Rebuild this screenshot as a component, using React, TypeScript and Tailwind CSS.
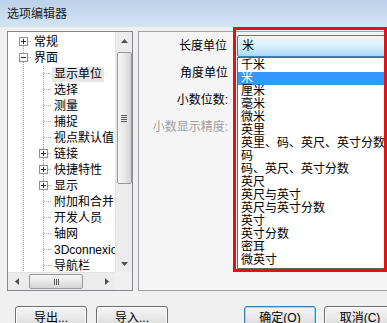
import React from "react";

type TreeNode = {
  label: string;
  level: 0 | 1;
  expander?: "plus" | "minus";
  first?: boolean;
  selected?: boolean;
};

const treeNodes: TreeNode[] = [
  { label: "常规", level: 0, expander: "plus", first: true },
  { label: "界面", level: 0, expander: "minus" },
  { label: "显示单位", level: 1, selected: true },
  { label: "选择", level: 1 },
  { label: "测量", level: 1 },
  { label: "捕捉", level: 1 },
  { label: "视点默认值", level: 1 },
  { label: "链接", level: 1, expander: "plus" },
  { label: "快捷特性", level: 1, expander: "plus" },
  { label: "显示", level: 1, expander: "plus" },
  { label: "附加和合并", level: 1 },
  { label: "开发人员", level: 1 },
  { label: "轴网", level: 1 },
  { label: "3Dconnexion", level: 1 },
  { label: "导航栏", level: 1 },
];

const unitOptions = [
  "千米",
  "米",
  "厘米",
  "毫米",
  "微米",
  "英里",
  "英里、码、英尺、英寸分数",
  "码",
  "码、英尺、英寸分数",
  "英尺",
  "英尺与英寸",
  "英尺与英寸分数",
  "英寸",
  "英寸分数",
  "密耳",
  "微英寸",
];

const DOT = "#a0a0a0";

// vertical dotted guide for an ancestor level
function Guide() {
  return (
    <svg width="20" height="16" className="shrink-0 block">
      <line x1="15.5" y1="0" x2="15.5" y2="16" stroke={DOT} strokeDasharray="1 1" />
    </svg>
  );
}

// branch connector with optional +/- box
function Branch({ first, expander }: { first?: boolean; expander?: "plus" | "minus" }) {
  return (
    <svg width="24" height="16" className="shrink-0 block">
      <line x1="15.5" y1={first ? 8 : 0} x2="15.5" y2="16" stroke={DOT} strokeDasharray="1 1" />
      <line x1="16" y1="7.5" x2="24" y2="7.5" stroke={DOT} strokeDasharray="1 1" />
      {expander && (
        <g>
          <rect x="11.5" y="3.5" width="8" height="8" fill="#fbfbfb" stroke="#8f8f8f" />
          <line x1="13" y1="7.5" x2="18" y2="7.5" stroke="#2b2b2b" />
          {expander === "plus" && <line x1="15.5" y1="5" x2="15.5" y2="10" stroke="#2b2b2b" />}
        </g>
      )}
    </svg>
  );
}

function Arrow({ dir }: { dir: "up" | "down" | "left" | "right" }) {
  const pts = {
    up: "0,4 7,4 3.5,0",
    down: "0,0 7,0 3.5,4",
    left: "4,0 4,7 0,3.5",
    right: "0,0 0,7 4,3.5",
  }[dir];
  const vertical = dir === "up" || dir === "down";
  return (
    <svg width={vertical ? 7 : 4} height={vertical ? 4 : 7}>
      <polygon points={pts} fill="#505050" />
    </svg>
  );
}

function Button({ label, focused }: { label: string; focused?: boolean }) {
  return (
    <div
      className={`w-[72px] h-[23px] rounded-[3px] border flex items-center justify-center bg-gradient-to-b from-[#f3f3f3] via-[#e9e9e9] to-[#d6d6d6] ${
        focused ? "border-[#3c7fb1] shadow-[inset_0_0_0_1px_#9fd4f5]" : "border-[#707070] shadow-[inset_0_0_0_1px_#fbfbfb]"
      }`}
    >
      {label}
    </div>
  );
}

export default function App() {
  return (
    <div className="relative w-[387px] h-[323px] overflow-hidden bg-[#f0f0f0] text-[12px] leading-[16px] text-black font-['Liberation_Sans','Noto_Sans_CJK_SC',sans-serif]">
      {/* title bar */}
      <div className="h-[27px] flex items-center pl-[7px] bg-gradient-to-b from-[#bcd2ea] to-[#d3e3f3] text-[#1b1b1b]">
        选项编辑器
      </div>

      <div className="flex pl-[7px] pt-[4px] gap-[5px]">
        {/* options tree */}
        <div className="w-[126px] h-[260px] shrink-0 border border-[#828790] bg-white flex flex-col">
          <div className="flex h-[240px]">
            <div className="w-[107px] overflow-hidden pt-[2px]">
              {treeNodes.map((node) => (
                <div key={node.label} className="flex h-[16px] items-center whitespace-nowrap">
                  {node.level === 1 && <Guide />}
                  <Branch first={node.first} expander={node.expander} />
                  <span className={`px-[2px] h-[15px] leading-[15px] ${node.selected ? "bg-[#e6e6e6]" : ""}`}>
                    {node.label}
                  </span>
                </div>
              ))}
            </div>
            {/* vertical scrollbar */}
            <div className="w-[17px] bg-[#ececec] border-l border-[#e3e3e3] flex flex-col items-center">
              <div className="h-[17px] w-full flex items-center justify-center">
                <Arrow dir="up" />
              </div>
              <div className="mt-[3px] h-[132px] w-[15px] rounded-[2px] border border-[#9a9a9a] bg-gradient-to-r from-[#f6f6f6] via-[#e8e8e8] to-[#d4d4d4] flex flex-col items-center justify-center gap-[1px]">
                <div className="w-[6px] h-[1px] bg-[#5a5a5a]" />
                <div className="w-[6px] h-[1px] bg-[#5a5a5a]" />
                <div className="w-[6px] h-[1px] bg-[#5a5a5a]" />
                <div className="w-[6px] h-[1px] bg-[#5a5a5a]" />
              </div>
              <div className="flex-1" />
              <div className="h-[17px] w-full flex items-center justify-center">
                <Arrow dir="down" />
              </div>
            </div>
          </div>
          {/* horizontal scrollbar */}
          <div className="flex h-[18px]">
            <div className="w-[107px] bg-[#ececec] border-t border-[#e3e3e3] flex items-center">
              <div className="w-[17px] flex justify-center">
                <Arrow dir="left" />
              </div>
              <div className="ml-[4px] w-[54px] h-[15px] rounded-[2px] border border-[#9a9a9a] bg-gradient-to-b from-[#f6f6f6] via-[#e8e8e8] to-[#d4d4d4] flex items-center justify-center gap-[1px]">
                <div className="w-[1px] h-[6px] bg-[#5a5a5a]" />
                <div className="w-[1px] h-[6px] bg-[#5a5a5a]" />
                <div className="w-[1px] h-[6px] bg-[#5a5a5a]" />
              </div>
              <div className="flex-1" />
              <div className="w-[17px] flex justify-center">
                <Arrow dir="right" />
              </div>
            </div>
            <div className="flex-1 bg-[#f0f0f0]" />
          </div>
        </div>

        {/* display units page */}
        <div className="w-[260px] h-[260px] shrink-0 border border-[#a0a0a0] bg-[#f5f5f5] flex flex-col">
          <div className="flex h-[27px] items-center">
            <div className="w-[89px] text-right">长度单位</div>
            <div className="ml-[10px] relative">
              <div className="w-[160px] h-[22px] border border-[#3c7fb1] rounded-[2px] bg-gradient-to-b from-[#eaf6fd] via-[#d9f0fc] to-[#a7d9f5] flex items-center pl-[4px]">
                米
              </div>
              <div className="absolute left-0 top-full w-[160px] border border-[#646464] bg-white py-[1px]">
                {unitOptions.map((opt) => (
                  <div
                    key={opt}
                    className={`h-[13px] leading-[13px] pl-[3px] whitespace-nowrap ${
                      opt === "米" ? "bg-[#3399ff] text-white" : ""
                    }`}
                  >
                    {opt}
                  </div>
                ))}
              </div>
            </div>
          </div>
          <div className="flex h-[27px] items-center">
            <div className="w-[89px] text-right">角度单位</div>
          </div>
          <div className="flex h-[27px] items-center">
            <div className="w-[89px] text-right">小数位数:</div>
          </div>
          <div className="flex h-[27px] items-center">
            <div className="w-[89px] text-right text-[#a0a0a0]">小数显示精度:</div>
          </div>
        </div>
      </div>

      {/* dialog buttons */}
      <div className="flex mt-[15px] pl-[15px]">
        <div className="flex gap-[9px]">
          <Button label="导出..." />
          <Button label="导入..." />
        </div>
        <div className="flex gap-[8px] ml-[76px]">
          <Button label="确定(O)" focused />
          <Button label="取消(C)" />
        </div>
      </div>

      {/* red annotation frame */}
      <div className="absolute left-[233px] top-[27px] w-[154px] h-[245px] border-[3px] border-[#e50f14] pointer-events-none" />
    </div>
  );
}
